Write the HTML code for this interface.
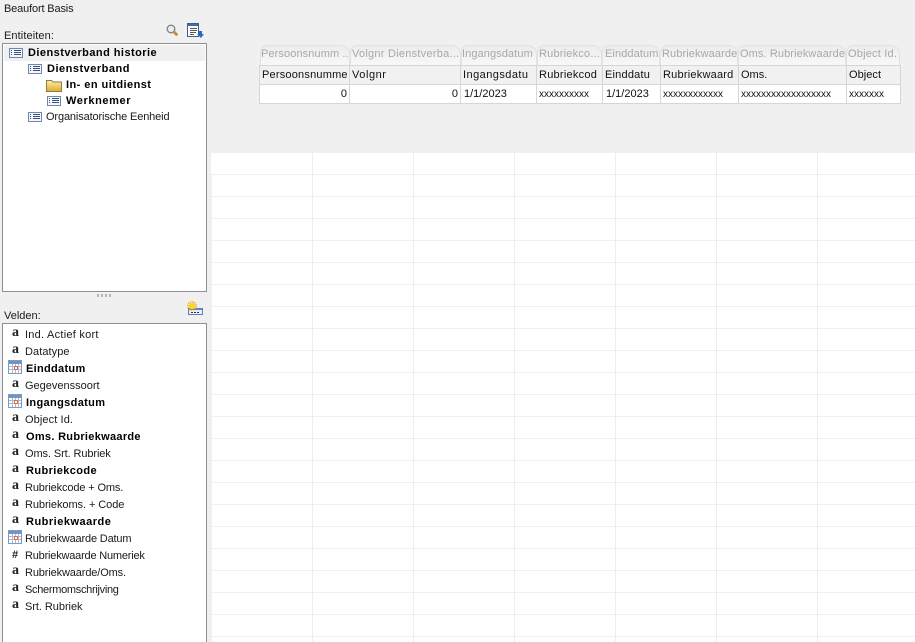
<!DOCTYPE html>
<html>
<head>
<meta charset="utf-8">
<style>
html,body{margin:0;padding:0;width:915px;height:642px;overflow:hidden;background:#f0f0f0;}
body{position:relative;font-family:"Liberation Sans",sans-serif;font-size:11px;color:#1a1a1a;}
.t{position:absolute;white-space:nowrap;line-height:14px;}
.b{font-weight:bold;color:#000;}
.box{position:absolute;background:#fff;border:1px solid #8b9097;box-sizing:border-box;}
.ic{position:absolute;}
.hl{position:absolute;left:212px;width:703px;height:1px;background:#efefef;}
.vl{position:absolute;top:153px;width:1px;height:489px;background:#eeeeee;}
.tab{position:absolute;top:45px;height:20px;box-sizing:border-box;border:1px solid #e2e2e2;border-bottom:none;border-radius:7px 9px 0 0;background:linear-gradient(#ececec,#f8f8f8);color:#a8a8a8;line-height:17px;padding-left:0;white-space:nowrap;overflow:hidden;}
.h{position:absolute;top:65px;height:20px;box-sizing:border-box;background:#f1f1f1;border:1px solid #d6d6d6;line-height:18px;padding-left:2px;color:#111;white-space:nowrap;overflow:hidden;}
.c{position:absolute;top:84px;height:20px;box-sizing:border-box;background:#fff;border:1px solid #d6d6d6;line-height:18px;padding:0 2px;color:#111;white-space:nowrap;overflow:hidden;}
.x{font-size:10px;line-height:20px;}
.a{position:absolute;left:12px;font:bold 14px/12px "Liberation Serif",serif;color:#222;}
</style>
</head>
<body>
<svg width="0" height="0" style="position:absolute">
<defs>
<g id="list"><rect x=".5" y=".5" width="13" height="9" fill="#f4f7fb" stroke="#6f86ad"/><path d="M2 2.500h1M2 4.500h1M2 6.500h1M5 2.500h7M5 4.500h7M5 6.500h7" stroke="#3c5177"/></g>
<g id="cal"><rect x=".5" y=".5" width="13" height="13" fill="#fff" stroke="#7f99bf"/><rect x="1" y="1" width="12" height="3" fill="#6f94c8"/><path d="M1 6.500h12M1 9.500h12M4.500 4v9M7.500 4v9M10.500 4v9" stroke="#a9bddb"/><rect x="6" y="6" width="4" height="4" fill="#e9683c"/><rect x="7" y="7" width="2" height="2" fill="#fff"/></g>
<linearGradient id="fo" x1="0" y1="0" x2="0" y2="1"><stop offset="0" stop-color="#fdf0b0"/><stop offset="1" stop-color="#dfa92d"/></linearGradient>
</defs>
</svg>

<div class="t" style="left:4px;top:2px;letter-spacing:-.15px">Beaufort Basis</div>
<div class="t" style="left:4px;top:29px;letter-spacing:.1px">Entiteiten:</div>

<svg class="ic" style="left:166px;top:24px" width="13" height="13" viewBox="0 0 13 13"><circle cx="5" cy="5" r="3.800" fill="#e6edf3" stroke="#7d8790" stroke-width="1.400"/><path d="M7.500 7.500l3.800 3.800" stroke="#c98a35" stroke-width="2.800"/></svg>
<svg class="ic" style="left:187px;top:23px" width="17" height="16" viewBox="0 0 17 16"><rect x=".5" y=".5" width="11" height="13" fill="#fff" stroke="#3d5f8f"/><rect x="1" y="1" width="10" height="2" fill="#3d6fb0"/><path d="M3 5.500h7M3 7.500h7M3 9.500h6M3 11.500h4" stroke="#555"/><path d="M12 8v3h-2l4 4 3-4h-2V8z" fill="#2a6bc4"/></svg>

<div class="box" style="left:2px;top:43px;width:205px;height:249px;"></div>
<div style="position:absolute;left:4px;top:45px;width:201px;height:16px;background:#f0f0f0;"></div>
<svg class="ic" style="left:9px;top:48px" width="14" height="10"><use href="#list"/></svg>
<div class="t b" style="left:28px;top:46px;letter-spacing:.45px">Dienstverband historie</div>
<svg class="ic" style="left:28px;top:64px" width="14" height="10"><use href="#list"/></svg>
<div class="t b" style="left:47px;top:62px;letter-spacing:.5px">Dienstverband</div>
<svg class="ic" style="left:46px;top:79px" width="16" height="13" viewBox="0 0 16 13"><path d="M.5 12.500V1.500h5l1.500 1.500h8.500v9.500z" fill="url(#fo)" stroke="#8f7a3f"/></svg>
<div class="t b" style="left:66px;top:78px;letter-spacing:.45px">In- en uitdienst</div>
<svg class="ic" style="left:47px;top:96px" width="14" height="10"><use href="#list"/></svg>
<div class="t b" style="left:66px;top:94px;letter-spacing:.6px">Werknemer</div>
<svg class="ic" style="left:28px;top:112px" width="14" height="10"><use href="#list"/></svg>
<div class="t" style="left:46px;top:110px;letter-spacing:-.13px">Organisatorische Eenheid</div>

<div style="position:absolute;left:97px;top:294px;width:15px;height:3px;background:repeating-linear-gradient(90deg,#b5b5b5 0 2px,transparent 2px 4px);"></div>

<svg class="ic" style="left:187px;top:301px" width="16" height="15" viewBox="0 0 16 15"><rect x="1.500" y="7.500" width="14" height="6" fill="#eaf0f8" stroke="#5e7fb0"/><rect x="2" y="7" width="13" height="2" fill="#5d83c5"/><path d="M4 11.500h2M7 11.500h2M10 11.500h2" stroke="#1f3a66"/><circle cx="5" cy="5" r="3.200" fill="#fbd81f"/><circle cx="5" cy="5" r="4.200" fill="none" stroke="#ef9a12" stroke-width="1.200" stroke-dasharray="1.300 .9"/></svg>

<div class="t" style="left:4px;top:309px;">Velden:</div>

<div class="box" style="left:2px;top:323px;width:205px;height:325px;"></div>

<div class="a" style="top:327px">a</div><div class="t" style="left:25px;top:328px;letter-spacing:.25px">Ind. Actief kort</div>
<div class="a" style="top:344px">a</div><div class="t" style="left:25px;top:345px;letter-spacing:.07px">Datatype</div>
<svg class="ic" style="left:8px;top:360px" width="14" height="14"><use href="#cal"/></svg><div class="t b" style="left:26px;top:362px;letter-spacing:.3px">Einddatum</div>
<div class="a" style="top:378px">a</div><div class="t" style="left:25px;top:379px;">Gegevenssoort</div>
<svg class="ic" style="left:8px;top:394px" width="14" height="14"><use href="#cal"/></svg><div class="t b" style="left:26px;top:396px;letter-spacing:.35px">Ingangsdatum</div>
<div class="a" style="top:412px">a</div><div class="t" style="left:25px;top:413px;letter-spacing:.1px">Object Id.</div>
<div class="a" style="top:429px">a</div><div class="t b" style="left:26px;top:430px;letter-spacing:.3px">Oms. Rubriekwaarde</div>
<div class="a" style="top:446px">a</div><div class="t" style="left:25px;top:447px;letter-spacing:-.1px">Oms. Srt. Rubriek</div>
<div class="a" style="top:463px">a</div><div class="t b" style="left:26px;top:464px;letter-spacing:.4px">Rubriekcode</div>
<div class="a" style="top:480px">a</div><div class="t" style="left:25px;top:481px;letter-spacing:-.13px">Rubriekcode + Oms.</div>
<div class="a" style="top:497px">a</div><div class="t" style="left:25px;top:498px;letter-spacing:-.07px">Rubriekoms. + Code</div>
<div class="a" style="top:514px">a</div><div class="t b" style="left:26px;top:515px;letter-spacing:.5px">Rubriekwaarde</div>
<svg class="ic" style="left:8px;top:530px" width="14" height="14"><use href="#cal"/></svg><div class="t" style="left:25px;top:532px;letter-spacing:-.16px">Rubriekwaarde Datum</div>
<div class="t b" style="left:12px;top:548px;color:#222">#</div><div class="t" style="left:25px;top:549px;letter-spacing:-.2px">Rubriekwaarde Numeriek</div>
<div class="a" style="top:565px">a</div><div class="t" style="left:25px;top:566px;letter-spacing:-.13px">Rubriekwaarde/Oms.</div>
<div class="a" style="top:582px">a</div><div class="t" style="left:25px;top:583px;letter-spacing:-.3px">Schermomschrijving</div>
<div class="a" style="top:599px">a</div><div class="t" style="left:25px;top:600px;letter-spacing:-.05px">Srt. Rubriek</div>

<!-- grid -->
<div style="position:absolute;left:211px;top:153px;width:704px;height:489px;background:#fff;"></div>
<div style="position:absolute;left:211px;top:174px;width:1px;height:468px;background:#f0f0f0;"></div>
<div class="hl" style="top:174px"></div><div class="hl" style="top:196px"></div><div class="hl" style="top:218px"></div><div class="hl" style="top:240px"></div><div class="hl" style="top:262px"></div><div class="hl" style="top:284px"></div><div class="hl" style="top:306px"></div><div class="hl" style="top:328px"></div><div class="hl" style="top:350px"></div><div class="hl" style="top:372px"></div><div class="hl" style="top:394px"></div><div class="hl" style="top:416px"></div><div class="hl" style="top:438px"></div><div class="hl" style="top:460px"></div><div class="hl" style="top:482px"></div><div class="hl" style="top:504px"></div><div class="hl" style="top:526px"></div><div class="hl" style="top:548px"></div><div class="hl" style="top:570px"></div><div class="hl" style="top:592px"></div><div class="hl" style="top:614px"></div><div class="hl" style="top:636px"></div>
<div class="vl" style="left:312px"></div><div class="vl" style="left:413px"></div><div class="vl" style="left:514px"></div><div class="vl" style="left:615px"></div><div class="vl" style="left:716px"></div><div class="vl" style="left:817px"></div>

<!-- table tabs -->
<div class="tab" style="left:260px;width:90px;letter-spacing:.1px">Persoonsnumm ...</div>
<div class="tab" style="left:350px;width:111px;padding-left:1px;letter-spacing:.25px">Volgnr Dienstverba...</div>
<div class="tab" style="left:461px;width:76px;letter-spacing:.1px">Ingangsdatum</div>
<div class="tab" style="left:537px;width:65px;padding-left:1px;letter-spacing:.2px">Rubriekco...</div>
<div class="tab" style="left:602px;width:58px;padding-left:2px;letter-spacing:.1px">Einddatum</div>
<div class="tab" style="left:660px;width:78px;padding-left:1px;letter-spacing:.1px">Rubriekwaarde</div>
<div class="tab" style="left:738px;width:108px;padding-left:1px;letter-spacing:.1px">Oms. Rubriekwaarde</div>
<div class="tab" style="left:846px;width:54px;padding-left:1px;letter-spacing:.2px">Object Id.</div>

<!-- headers -->
<div class="h" style="left:259px;width:91px;letter-spacing:.2px">Persoonsnumme</div>
<div class="h" style="left:349px;width:112px;letter-spacing:.55px">Volgnr</div>
<div class="h" style="left:460px;width:77px;letter-spacing:.45px">Ingangsdatu</div>
<div class="h" style="left:536px;width:67px;letter-spacing:.25px">Rubriekcod</div>
<div class="h" style="left:602px;width:59px;letter-spacing:.2px">Einddatu</div>
<div class="h" style="left:660px;width:79px;letter-spacing:.22px">Rubriekwaard</div>
<div class="h" style="left:738px;width:109px;">Oms.</div>
<div class="h" style="left:846px;width:55px;letter-spacing:.05px">Object</div>

<!-- row -->
<div class="c" style="left:259px;width:91px;text-align:right">0</div>
<div class="c" style="left:349px;width:112px;text-align:right">0</div>
<div class="c" style="left:460px;width:77px;padding-left:3px">1/1/2023</div>
<div class="c x" style="left:536px;width:67px">xxxxxxxxxx</div>
<div class="c" style="left:602px;width:59px;padding-left:3px">1/1/2023</div>
<div class="c x" style="left:660px;width:79px">xxxxxxxxxxxx</div>
<div class="c x" style="left:738px;width:109px">xxxxxxxxxxxxxxxxxx</div>
<div class="c x" style="left:846px;width:55px">xxxxxxx</div>
</body>
</html>
